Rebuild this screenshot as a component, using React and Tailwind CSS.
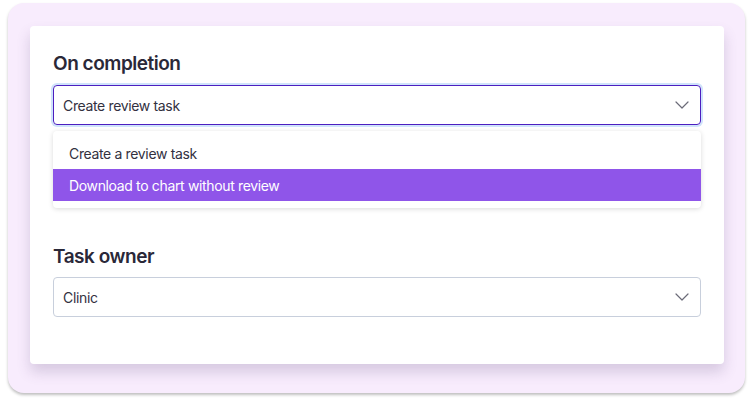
import { ChevronDown } from "lucide-react";

export default function App() {
  return (
    <div className="w-[753px] h-[407px] bg-white pt-[3px] pl-[8px]" style={{ fontFamily: "Inter, 'Liberation Sans', sans-serif" }}>
      <div className="w-[737px] h-[390px] rounded-2xl bg-[#f8ecfd] pt-[23px] pl-[22px] shadow-[0_2px_3px_rgba(0,0,0,0.25)]">
        <div className="w-[694px] h-[338px] bg-white rounded-sm shadow-[0_8px_14px_rgba(80,60,110,0.2)] px-[23px] pt-[26px]">
          <h2 className="text-[19px] font-semibold text-[#2a2838] leading-6 tracking-tight">On completion</h2>
          <div className="mt-[9px] h-[40px] rounded-[4px] border border-[#4c1fc0] ring-2 ring-[#cfe3fb] flex items-center justify-between pl-[9px] pr-[6px]">
            <span className="text-[14px] text-[#33313f] tracking-tight">Create review task</span>
            <ChevronDown className="w-6 h-6 text-[#6b6b78]" strokeWidth={1.2} />
          </div>
          <div className="mt-[6px] rounded-[4px] bg-white shadow-[0_1px_5px_rgba(0,0,0,0.15)] py-[7px]">
            <div className="h-[31px] flex items-center px-[16px] text-[14px] text-[#33313f] tracking-tight">Create a review task</div>
            <div className="h-[32px] flex items-center px-[16px] text-[14px] text-white bg-[#8f55e9] tracking-tight">Download to chart without review</div>
          </div>
          <h2 className="mt-[37px] text-[19px] font-semibold text-[#2a2838] leading-6 tracking-tight">Task owner</h2>
          <div className="mt-[8px] h-[40px] rounded-[4px] border border-[#c8cfdc] flex items-center justify-between pl-[9px] pr-[6px]">
            <span className="text-[14px] text-[#33313f] tracking-tight">Clinic</span>
            <ChevronDown className="w-6 h-6 text-[#6b6b78]" strokeWidth={1.2} />
          </div>
        </div>
      </div>
    </div>
  );
}
